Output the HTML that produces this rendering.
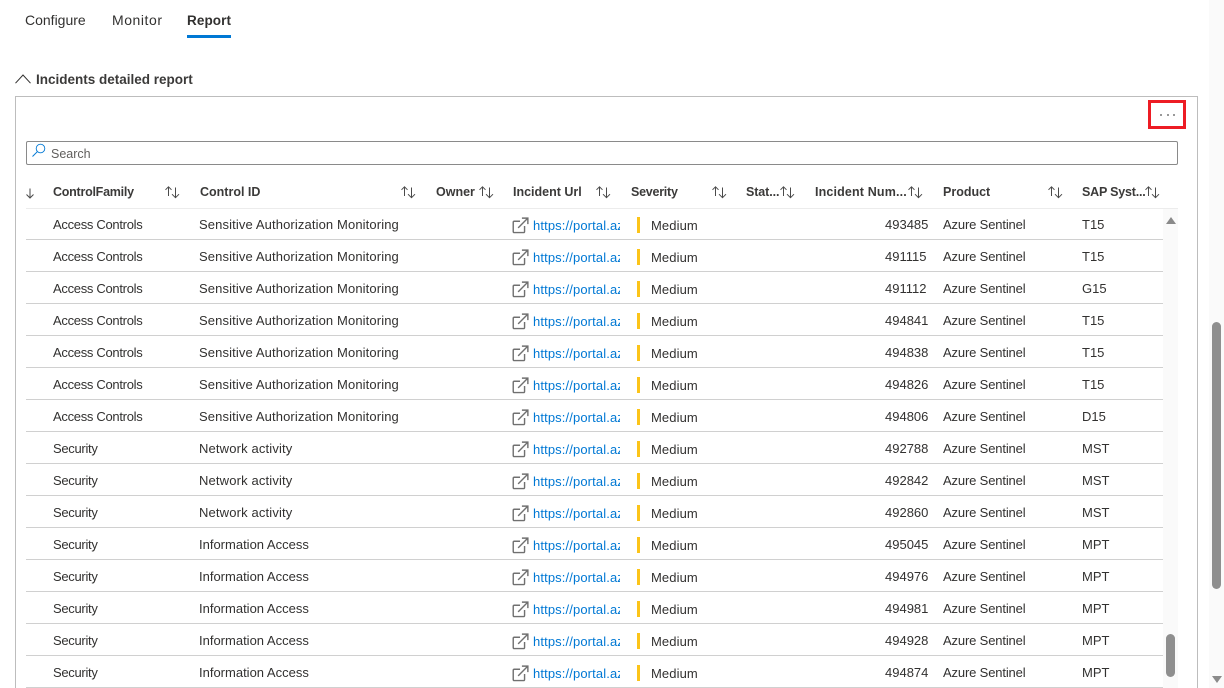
<!DOCTYPE html>
<html lang="en"><head><meta charset="utf-8"><title>Incidents detailed report</title>
<style>
html,body{margin:0;padding:0;width:1224px;height:688px;overflow:hidden;background:#fff}
body{position:relative;font-family:"Liberation Sans",sans-serif;font-size:13px;color:#323130}
.a{position:absolute;white-space:nowrap}
.tab{top:12px;font-size:14px;line-height:17px}
.h{top:185px;font-weight:700;font-size:12.5px;line-height:15px;color:#3b3a39}
.row{position:absolute;left:26px;width:1137px;height:32px;border-bottom:1px solid #d0d0d0;box-sizing:border-box}
.row span{position:absolute;top:9px;line-height:16px;white-space:nowrap}
.row .ac{left:27px;letter-spacing:-.3px}
.row .se{left:27px;letter-spacing:-.3px}
.row .sa{left:173px;letter-spacing:.12px}
.row .na{left:173px;letter-spacing:.15px}
.row .ia{left:173px}
.row .u{left:507px;color:#0078d4;width:87px;overflow:hidden;top:10px;letter-spacing:.12px}
.row .m{left:625px;top:10px;letter-spacing:.1px}
.row .n{left:859px}
.row .p{left:917px;letter-spacing:-.15px}
.row .s{left:1056px}
.row i{position:absolute;left:611px;top:9px;width:3px;height:16px;background:#fcc419}
.row svg{position:absolute;left:486px;top:9px}
.sort{position:absolute;top:185px}
</style></head><body>
<svg width="0" height="0" style="position:absolute"><defs>
<symbol id="ext" viewBox="0 0 18 18"><path d="M8.500 4.500H2.500a1.200 1.200 0 0 0-1.200 1.200v9.600a1.200 1.200 0 0 0 1.200 1.200h9.600a1.200 1.200 0 0 0 1.200-1.200V9.500M6.500 11.500 16.500 1.500M10.500 1.200h6.300v6.300" fill="none" stroke="#707070" stroke-width="1.500"/></symbol>
<symbol id="sort" viewBox="0 0 17 14"><path d="M4.500 11V2M1.500 4.800 4.500 1.800 7.500 4.800M11.500 2.500v10M8 9.200l3.500 3.500L15 9.200" fill="none" stroke="#4a4a4a" stroke-width="1"/></symbol>
</defs></svg>

<div class="a tab" style="left:25px">Configure</div>
<div class="a tab" style="left:112px;letter-spacing:.55px">Monitor</div>
<div class="a tab" style="left:187px;font-weight:700;font-size:13.5px;letter-spacing:.1px">Report</div>
<div class="a" style="left:187px;top:35px;width:44px;height:3px;background:#0078d4"></div>

<svg class="a" style="left:15px;top:72px" width="18" height="13"><path d="M.5 11.200 8 3 15.500 11.200" fill="none" stroke="#323130" stroke-width="1"/></svg>
<div class="a" style="left:36px;top:71px;font-weight:700;font-size:13.5px;line-height:17px;color:#3b3a39">Incidents detailed report</div>

<div class="a" style="left:15px;top:96px;width:1183px;height:600px;border:1px solid #bdbdbd;box-sizing:border-box"></div>
<div class="a" style="left:1148px;top:100px;width:38px;height:29px;border:3px solid #ed1c24;box-sizing:border-box"></div>
<div class="a" style="left:1160px;top:114px;width:2px;height:2px;background:#999"></div>
<div class="a" style="left:1167px;top:114px;width:2px;height:2px;background:#999"></div>
<div class="a" style="left:1173px;top:114px;width:2px;height:2px;background:#999"></div>

<div class="a" style="left:26px;top:141px;width:1152px;height:24px;border:1px solid #8a8a8a;border-radius:2px;box-sizing:border-box"></div>
<svg class="a" style="left:31px;top:143px" width="15" height="15"><circle cx="9.500" cy="5.500" r="4.300" fill="none" stroke="#0078d4" stroke-width=".9"/><path d="M6.300 8.700 1.500 13.500" stroke="#0078d4" stroke-width="1"/></svg>
<div class="a" style="left:51px;top:147px;line-height:15px;font-size:12.500px;color:#605e5c">Search</div>

<svg class="a" style="left:25px;top:187px" width="10" height="13"><path d="M5 1.500v9.500M1.500 7.500 5 11 8.500 7.500" fill="none" stroke="#4a4a4a" stroke-width="1"/></svg>
<div class="a h" style="left:53px;letter-spacing:-.25px">ControlFamily</div>
<div class="a h" style="left:200px">Control ID</div>
<div class="a h" style="left:436px">Owner</div>
<div class="a h" style="left:513px">Incident Url</div>
<div class="a h" style="left:631px;letter-spacing:-.25px">Severity</div>
<div class="a h" style="left:746px;letter-spacing:-.1px">Stat...</div>
<div class="a h" style="left:815px;letter-spacing:.15px">Incident Num...</div>
<div class="a h" style="left:943px">Product</div>
<div class="a h" style="left:1082px;letter-spacing:-.2px">SAP Syst...</div>
<svg class="sort" style="left:164px" width="17" height="14"><use href="#sort"/></svg>
<svg class="sort" style="left:400px" width="17" height="14"><use href="#sort"/></svg>
<svg class="sort" style="left:478px" width="17" height="14"><use href="#sort"/></svg>
<svg class="sort" style="left:595px" width="17" height="14"><use href="#sort"/></svg>
<svg class="sort" style="left:711px" width="17" height="14"><use href="#sort"/></svg>
<svg class="sort" style="left:779px" width="17" height="14"><use href="#sort"/></svg>
<svg class="sort" style="left:907px" width="17" height="14"><use href="#sort"/></svg>
<svg class="sort" style="left:1047px" width="17" height="14"><use href="#sort"/></svg>
<svg class="sort" style="left:1144px" width="17" height="14"><use href="#sort"/></svg>
<div class="a" style="left:26px;top:208px;width:1152px;height:1px;background:#ececec"></div>

<div class="row" style="top:208px"><span class="ac">Access Controls</span><span class="sa">Sensitive Authorization Monitoring</span><svg width="17" height="17"><use href="#ext"/></svg><span class="u">https://portal.azure.com</span><i></i><span class="m">Medium</span><span class="n">493485</span><span class="p">Azure Sentinel</span><span class="s">T15</span></div>
<div class="row" style="top:240px"><span class="ac">Access Controls</span><span class="sa">Sensitive Authorization Monitoring</span><svg width="17" height="17"><use href="#ext"/></svg><span class="u">https://portal.azure.com</span><i></i><span class="m">Medium</span><span class="n">491115</span><span class="p">Azure Sentinel</span><span class="s">T15</span></div>
<div class="row" style="top:272px"><span class="ac">Access Controls</span><span class="sa">Sensitive Authorization Monitoring</span><svg width="17" height="17"><use href="#ext"/></svg><span class="u">https://portal.azure.com</span><i></i><span class="m">Medium</span><span class="n">491112</span><span class="p">Azure Sentinel</span><span class="s">G15</span></div>
<div class="row" style="top:304px"><span class="ac">Access Controls</span><span class="sa">Sensitive Authorization Monitoring</span><svg width="17" height="17"><use href="#ext"/></svg><span class="u">https://portal.azure.com</span><i></i><span class="m">Medium</span><span class="n">494841</span><span class="p">Azure Sentinel</span><span class="s">T15</span></div>
<div class="row" style="top:336px"><span class="ac">Access Controls</span><span class="sa">Sensitive Authorization Monitoring</span><svg width="17" height="17"><use href="#ext"/></svg><span class="u">https://portal.azure.com</span><i></i><span class="m">Medium</span><span class="n">494838</span><span class="p">Azure Sentinel</span><span class="s">T15</span></div>
<div class="row" style="top:368px"><span class="ac">Access Controls</span><span class="sa">Sensitive Authorization Monitoring</span><svg width="17" height="17"><use href="#ext"/></svg><span class="u">https://portal.azure.com</span><i></i><span class="m">Medium</span><span class="n">494826</span><span class="p">Azure Sentinel</span><span class="s">T15</span></div>
<div class="row" style="top:400px"><span class="ac">Access Controls</span><span class="sa">Sensitive Authorization Monitoring</span><svg width="17" height="17"><use href="#ext"/></svg><span class="u">https://portal.azure.com</span><i></i><span class="m">Medium</span><span class="n">494806</span><span class="p">Azure Sentinel</span><span class="s">D15</span></div>
<div class="row" style="top:432px"><span class="se">Security</span><span class="na">Network activity</span><svg width="17" height="17"><use href="#ext"/></svg><span class="u">https://portal.azure.com</span><i></i><span class="m">Medium</span><span class="n">492788</span><span class="p">Azure Sentinel</span><span class="s">MST</span></div>
<div class="row" style="top:464px"><span class="se">Security</span><span class="na">Network activity</span><svg width="17" height="17"><use href="#ext"/></svg><span class="u">https://portal.azure.com</span><i></i><span class="m">Medium</span><span class="n">492842</span><span class="p">Azure Sentinel</span><span class="s">MST</span></div>
<div class="row" style="top:496px"><span class="se">Security</span><span class="na">Network activity</span><svg width="17" height="17"><use href="#ext"/></svg><span class="u">https://portal.azure.com</span><i></i><span class="m">Medium</span><span class="n">492860</span><span class="p">Azure Sentinel</span><span class="s">MST</span></div>
<div class="row" style="top:528px"><span class="se">Security</span><span class="ia">Information Access</span><svg width="17" height="17"><use href="#ext"/></svg><span class="u">https://portal.azure.com</span><i></i><span class="m">Medium</span><span class="n">495045</span><span class="p">Azure Sentinel</span><span class="s">MPT</span></div>
<div class="row" style="top:560px"><span class="se">Security</span><span class="ia">Information Access</span><svg width="17" height="17"><use href="#ext"/></svg><span class="u">https://portal.azure.com</span><i></i><span class="m">Medium</span><span class="n">494976</span><span class="p">Azure Sentinel</span><span class="s">MPT</span></div>
<div class="row" style="top:592px"><span class="se">Security</span><span class="ia">Information Access</span><svg width="17" height="17"><use href="#ext"/></svg><span class="u">https://portal.azure.com</span><i></i><span class="m">Medium</span><span class="n">494981</span><span class="p">Azure Sentinel</span><span class="s">MPT</span></div>
<div class="row" style="top:624px"><span class="se">Security</span><span class="ia">Information Access</span><svg width="17" height="17"><use href="#ext"/></svg><span class="u">https://portal.azure.com</span><i></i><span class="m">Medium</span><span class="n">494928</span><span class="p">Azure Sentinel</span><span class="s">MPT</span></div>
<div class="row" style="top:656px"><span class="se">Security</span><span class="ia">Information Access</span><svg width="17" height="17"><use href="#ext"/></svg><span class="u">https://portal.azure.com</span><i></i><span class="m">Medium</span><span class="n">494874</span><span class="p">Azure Sentinel</span><span class="s">MPT</span></div>

<div class="a" style="left:1163px;top:209px;width:15px;height:479px;background:#fafafa"></div>
<div class="a" style="left:1166px;top:217px;width:0;height:0;border-left:5px solid transparent;border-right:5px solid transparent;border-bottom:7px solid #8a8a8a"></div>
<div class="a" style="left:1166px;top:634px;width:9px;height:43px;background:#8f8f8f;border-radius:5px"></div>

<div class="a" style="left:1209px;top:0;width:15px;height:688px;background:#fafafa"></div>
<div class="a" style="left:1212px;top:322px;width:9px;height:267px;background:#8f8f8f;border-radius:5px"></div>
<div class="a" style="left:1212px;top:676px;width:0;height:0;border-left:5px solid transparent;border-right:5px solid transparent;border-top:7px solid #8a8a8a"></div>
</body></html>
